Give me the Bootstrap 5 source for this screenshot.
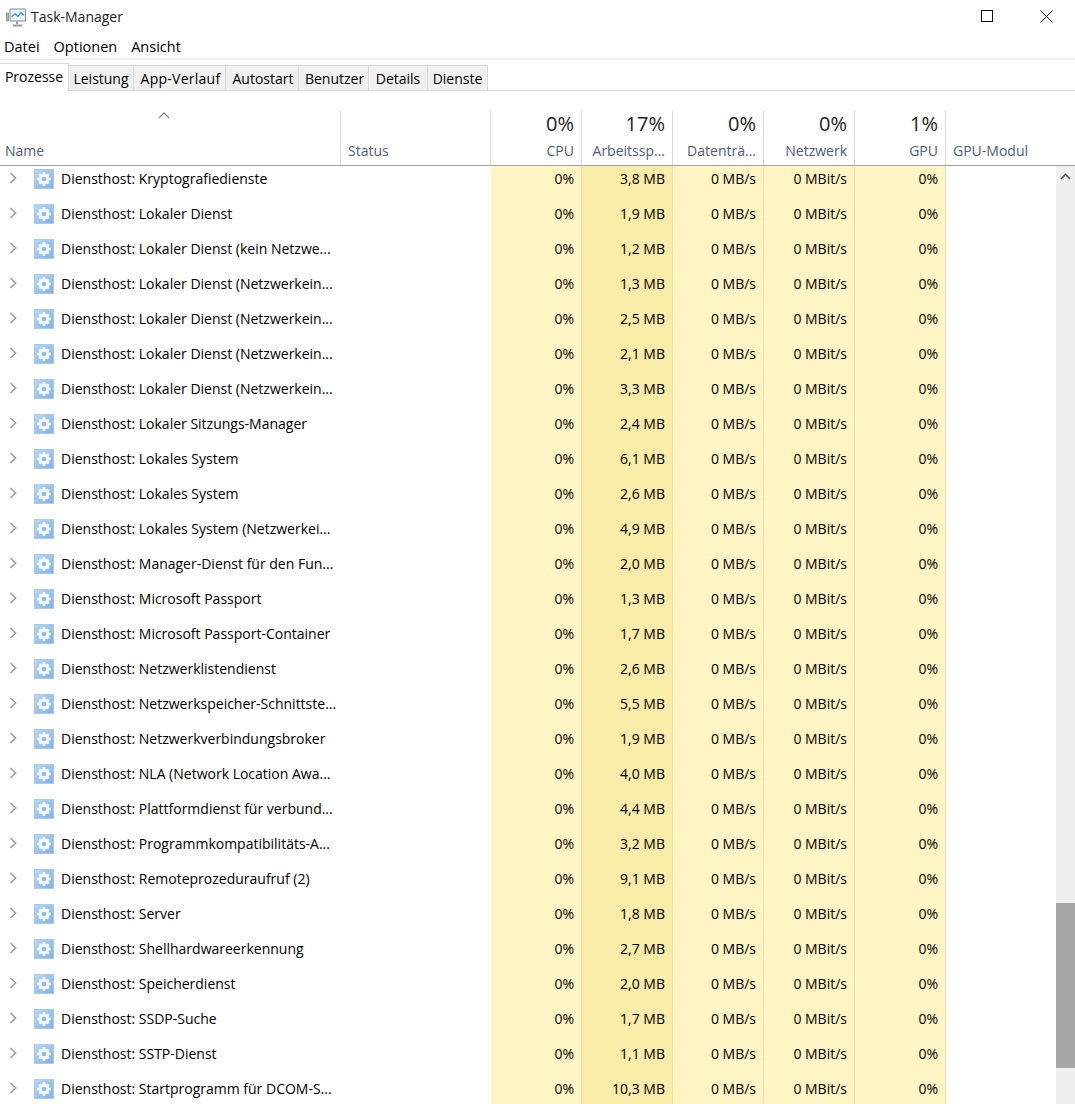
<!DOCTYPE html>
<html lang="de">
<head>
<meta charset="utf-8">
<title>Task-Manager</title>
<link href="https://cdn.jsdelivr.net/npm/bootstrap@5.3.0/dist/css/bootstrap.min.css" rel="stylesheet">
<style>
html,body{height:100%;overflow:hidden}
body{font-family:"Open Sans","Noto Sans",sans-serif;font-size:14px;color:#000;background:#fff}
.tm-app{height:1104px;overflow:hidden}
.tm-title{height:34px;padding-left:6px}
.tm-title-text{font-size:14px;margin-left:5px;color:#222;padding-bottom:2px}
.tm-winbtns{margin-bottom:2px}
.tm-winbtn{width:58px}
.tm-winbtn-max{margin-right:1px}
.tm-menu{height:22px;padding:2px 0 0 4px;gap:14px;font-size:14.5px;border-bottom:2px solid #f0f0f0;box-sizing:content-box}
.tm-tabs{height:31px;border-bottom:1px solid #d9d9d9;padding-top:4px;flex-shrink:0}
.tm-tabs .nav-link{border:1px solid #d9d9d9;border-left:0;border-bottom:0;border-radius:0;background:#f0f0f0;color:#000;padding:0;text-align:center;height:25px;line-height:26px;margin-top:1px;font-size:14px}
.tm-tabs .nav-link.active{background:#fff;color:#000;margin-top:-1px;height:28px;line-height:26px;width:69px;position:relative}
.tm-tabs .tm-nudge{padding-left:2px}
.tm-t2{width:65px}
.tm-t3{width:92px;letter-spacing:.25px}
.tm-t4{width:73px}
.tm-t5{width:70px}
.tm-t6{width:59px}
.tm-t7{width:60px}
.tm-head{height:75px;border-bottom:1px solid #a0a0a0;flex-shrink:0}
.tm-hcell{border-right:1px solid #d9d9d9;margin-top:20px;height:54px;padding:0 7px;color:#4c607a;font-size:14px;line-height:19px;text-align:right;white-space:nowrap;overflow:hidden}
.tm-hval{font-size:20px;color:#222;line-height:26px;height:30px;display:block}
.c-name{width:341px}
.c-status{width:150px}
.c-num{width:91px}
.c-gpu{width:110px}
.tm-hcell.c-name{text-align:left;padding-left:5px;position:relative;padding-top:30px}
.tm-hcell.c-status,.tm-hcell.c-gpu{text-align:left;padding-top:30px}
.tm-hcell.c-gpu{border-right:0}
.tm-sort{position:absolute;left:158px;top:1px}
.tm-body{flex:1 1 auto;min-height:0;overflow:hidden}
.tm-rows{width:1056px;overflow:hidden}
.tm-rows-inner{margin-top:-5px}
.tm-row{height:35px;line-height:35px}
.tm-namecell{padding-left:9px;white-space:nowrap;overflow:hidden}
.tm-chev{width:9px;height:12px;margin-top:-2px;margin-right:16px;flex-shrink:0}
.tm-gear{width:20px;height:20px;margin-right:7px;flex-shrink:0}
.tm-cell{background:#fff4c4;border-right:1px solid #f1dfa6;text-align:right;padding-right:7px;white-space:nowrap}
.tm-cell.tm-mem{background:#f9eba8}
.tm-scroll{width:19px;background:#f0f0f0;flex-shrink:0}
.tm-arrow{height:21px}
.tm-track{height:716px}
.tm-thumb{height:165px;background:#a6a6a6}
</style>
</head>
<body>
<div class="tm-app d-flex flex-column">
  <div class="tm-title d-flex align-items-center flex-shrink-0">
    <svg width="20" height="19" viewBox="0 0 20 19"><rect x="0.5" y="5" width="2" height="8" fill="#8fbf8f" stroke="#777" stroke-width=".6"/><path d="M4 1h15.500v12H4z" fill="#e8f3fc" stroke="#8a8f96"/><path d="M5.500 9l3.500-3.500 3 3 3-4 3 3" fill="none" stroke="#3f93dc" stroke-width="1.200"/><path d="M11 13.500v2.500M7 17.500h9" stroke="#9a9a9a" stroke-width="2"/></svg>
    <span class="tm-title-text">Task-Manager</span>
    <div class="tm-winbtns ms-auto d-flex align-items-center">
      <div class="tm-winbtn tm-winbtn-max d-flex justify-content-center"><svg width="13" height="13" viewBox="0 0 13 13"><rect x=".5" y=".5" width="11" height="11" fill="none" stroke="#111"/></svg></div>
      <div class="tm-winbtn d-flex justify-content-center"><svg width="13" height="13" viewBox="0 0 13 13"><path d="M.5.5l12 12M12.500.5l-12 12" stroke="#111" fill="none"/></svg></div>
    </div>
  </div>
  <div class="tm-menu d-flex align-items-center flex-shrink-0"><span>Datei</span><span>Optionen</span><span>Ansicht</span></div>
  <ul class="nav tm-tabs">
    <li class="nav-item"><a class="nav-link active" href="#">Prozesse</a></li>
    <li class="nav-item"><a class="nav-link tm-t2" href="#">Leistung</a></li>
    <li class="nav-item"><a class="nav-link tm-t3 tm-nudge" href="#">App-Verlauf</a></li>
    <li class="nav-item"><a class="nav-link tm-t4 tm-nudge" href="#">Autostart</a></li>
    <li class="nav-item"><a class="nav-link tm-t5 tm-nudge" href="#">Benutzer</a></li>
    <li class="nav-item"><a class="nav-link tm-t6" href="#">Details</a></li>
    <li class="nav-item"><a class="nav-link tm-t7" href="#">Dienste</a></li>
  </ul>
  <div class="tm-head d-flex">
    <div class="tm-hcell c-name"><svg class="tm-sort" width="12" height="7" viewBox="0 0 12 7"><path d="M1 6l5-5 5 5" fill="none" stroke="#7f8ba0" stroke-width="1.300"/></svg>Name</div>
    <div class="tm-hcell c-status">Status</div>
    <div class="tm-hcell c-num"><span class="tm-hval">0%</span>CPU</div>
    <div class="tm-hcell c-num"><span class="tm-hval">17%</span>Arbeitssp...</div>
    <div class="tm-hcell c-num"><span class="tm-hval">0%</span>Datenträ...</div>
    <div class="tm-hcell c-num"><span class="tm-hval">0%</span>Netzwerk</div>
    <div class="tm-hcell c-num"><span class="tm-hval">1%</span>GPU</div>
    <div class="tm-hcell c-gpu">GPU-Modul</div>
  </div>
  <div class="tm-body d-flex">
    <div class="tm-rows"><div class="tm-rows-inner" id="rows"></div></div>
    <div class="tm-scroll">
      <div class="tm-arrow d-flex justify-content-center align-items-center"><svg width="11" height="7" viewBox="0 0 11 7"><path d="M1 6l4.500-4.500L10 6" fill="none" stroke="#555" stroke-width="1.600"/></svg></div>
      <div class="tm-track"></div>
      <div class="tm-thumb"></div>
    </div>
  </div>
</div>
<svg width="0" height="0" class="d-block"><defs>
<linearGradient id="gb" x1="0" y1="0" x2="1" y2="1"><stop offset="0" stop-color="#b9d8f4"/><stop offset="1" stop-color="#7fb0e8"/></linearGradient>
<symbol id="gear" viewBox="0 0 20 20"><rect x=".5" y=".5" width="19" height="19" fill="url(#gb)" stroke="#a9cbe9"/><g fill="#f2f7fd"><circle cx="10" cy="10" r="5.400"/><path d="M8.700 3h2.600v3H8.700zM8.700 14h2.600v3H8.700zM3 8.700h3v2.600H3zM14 8.700h3v2.600h-3z"/><path d="M4.400 6.200l1.800-1.800 2 2-1.800 1.800zM13.800 4.400l1.800 1.800-2 2-1.800-1.800zM15.600 13.800l-1.800 1.800-2-2 1.800-1.800zM6.200 15.600l-1.800-1.800 2-2 1.800 1.800z"/></g><circle cx="10" cy="10" r="2.300" fill="#8fbbea"/></symbol>
</defs></svg>
<script>
var data=[["Kryptografiedienste","3,8"],["Lokaler Dienst","1,9"],["Lokaler Dienst (kein Netzwe...","1,2"],["Lokaler Dienst (Netzwerkein...","1,3"],["Lokaler Dienst (Netzwerkein...","2,5"],["Lokaler Dienst (Netzwerkein...","2,1"],["Lokaler Dienst (Netzwerkein...","3,3"],["Lokaler Sitzungs-Manager","2,4"],["Lokales System","6,1"],["Lokales System","2,6"],["Lokales System (Netzwerkei...","4,9"],["Manager-Dienst für den Fun...","2,0"],["Microsoft Passport","1,3"],["Microsoft Passport-Container","1,7"],["Netzwerklistendienst","2,6"],["Netzwerkspeicher-Schnittste...","5,5"],["Netzwerkverbindungsbroker","1,9"],["NLA (Network Location Awa...","4,0"],["Plattformdienst für verbund...","4,4"],["Programmkompatibilitäts-A...","3,2"],["Remoteprozeduraufruf (2)","9,1"],["Server","1,8"],["Shellhardwareerkennung","2,7"],["Speicherdienst","2,0"],["SSDP-Suche","1,7"],["SSTP-Dienst","1,1"],["Startprogramm für DCOM-S...","10,3"]];
document.getElementById("rows").innerHTML=data.map(function(d){
return '<div class="tm-row d-flex"><div class="tm-namecell c-name d-flex align-items-center"><svg class="tm-chev" viewBox="0 0 9 12"><path d="M1.500 1l5 5-5 5" fill="none" stroke="#a0a0a0" stroke-width="1.700"/></svg><svg class="tm-gear"><use href="#gear"/></svg><span>Diensthost: '+d[0]+'</span></div><div class="c-status"></div><div class="tm-cell c-num">0%</div><div class="tm-cell tm-mem c-num">'+d[1]+' MB</div><div class="tm-cell c-num">0 MB/s</div><div class="tm-cell c-num">0 MBit/s</div><div class="tm-cell c-num">0%</div></div>';
}).join("");
</script>
<script src="https://cdn.jsdelivr.net/npm/bootstrap@5.3.0/dist/js/bootstrap.bundle.min.js"></script>
</body>
</html>
